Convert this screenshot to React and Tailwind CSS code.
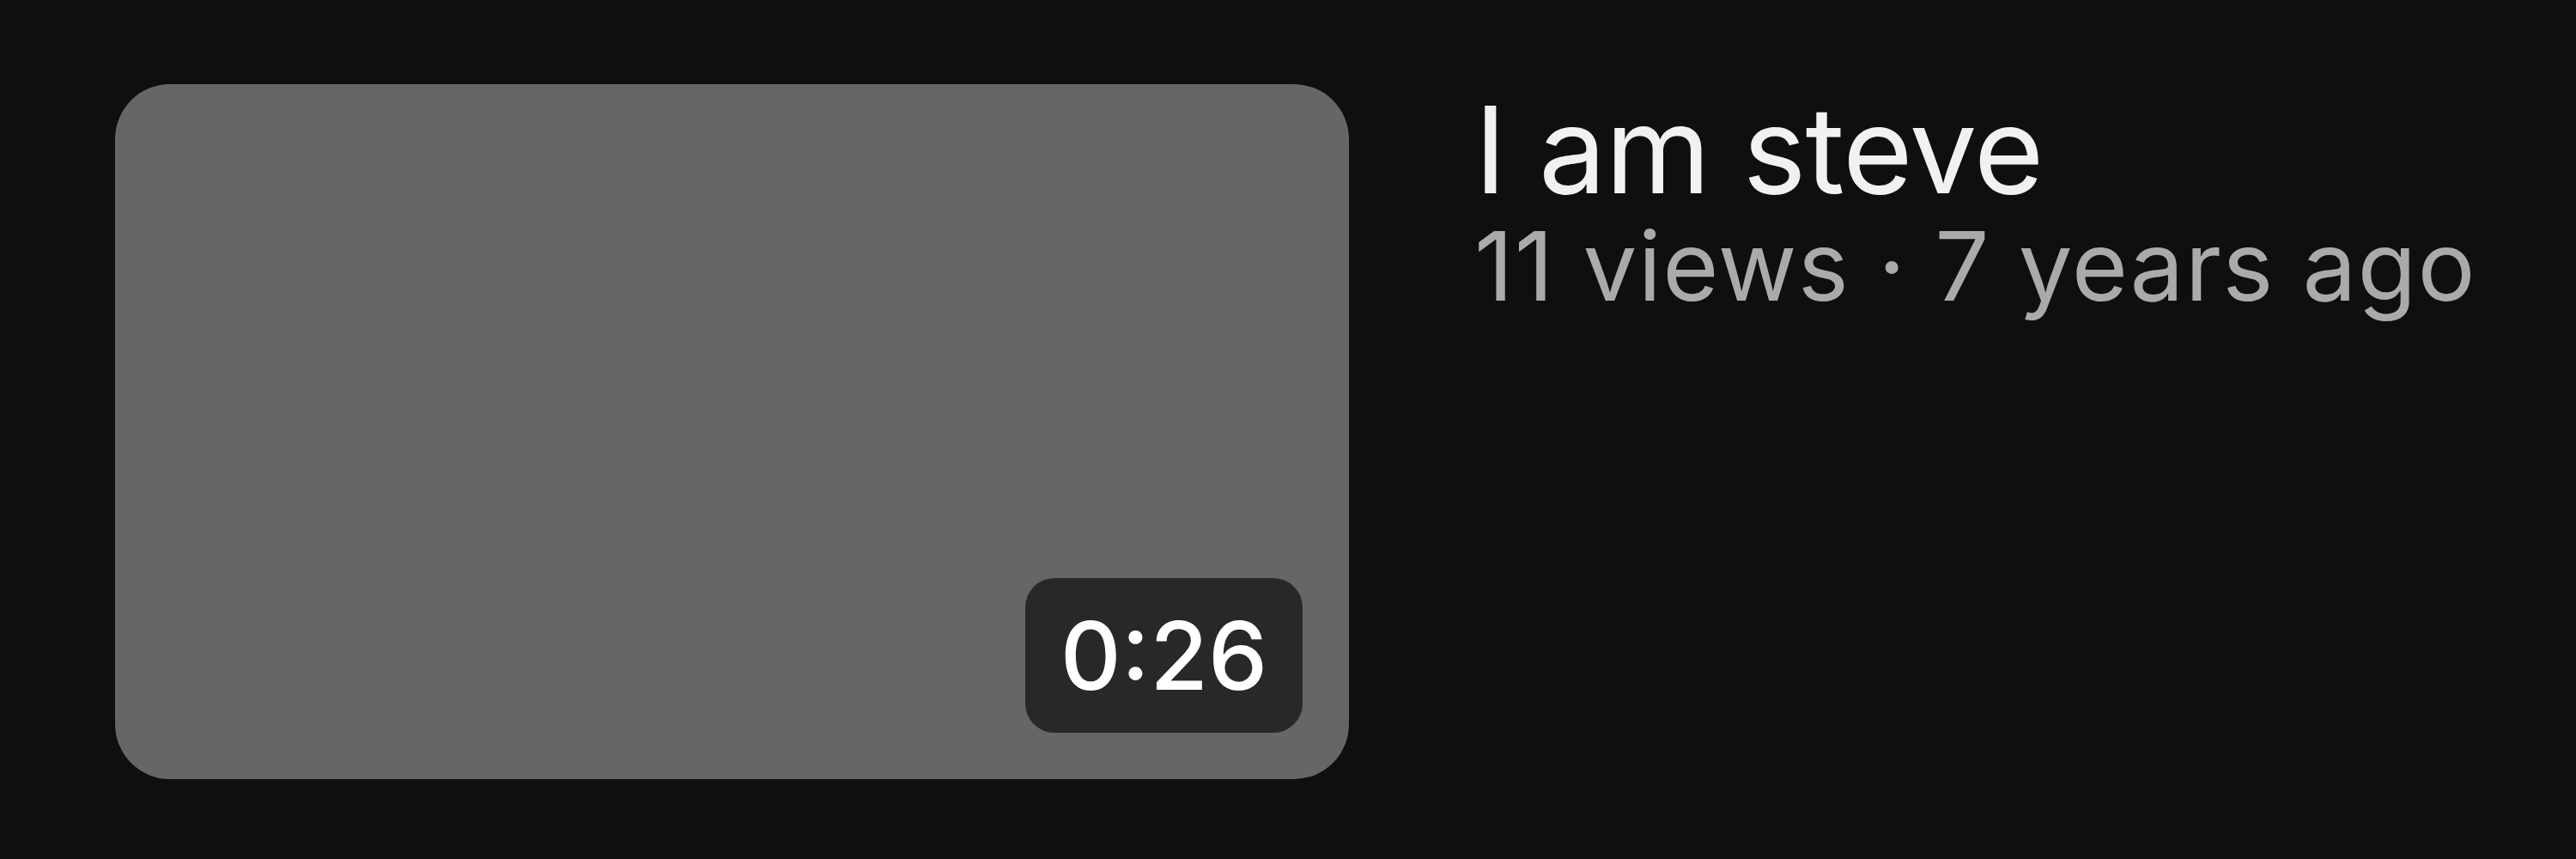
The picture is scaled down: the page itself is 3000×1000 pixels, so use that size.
export default function App() {
  return (
    <div className="w-[3000px] h-[1000px] bg-[#0f0f0f] flex items-start pl-[134px] pt-[98px]" style={{ fontFamily: 'Inter, "Noto Sans", sans-serif' }}>
      <div className="relative w-[1437px] h-[809px] rounded-[64px] bg-[#666666] shrink-0">
        <div className="absolute right-[54px] bottom-[54px] w-[323px] h-[180px] rounded-[34px] bg-[#282828] flex items-center justify-center">
          <span className="text-[110px] leading-none font-medium text-white">0:26</span>
        </div>
      </div>
      <div className="ml-[146px] mt-[6px] flex flex-col">
        <div className="text-[140px] leading-[140px] tracking-[-1px] text-[#f1f1f1]">I am steve</div>
        <div className="text-[112px] leading-[131px] tracking-[1.3px] text-[#aaaaaa]">11 views · 7 years ago</div>
      </div>
    </div>
  );
}
